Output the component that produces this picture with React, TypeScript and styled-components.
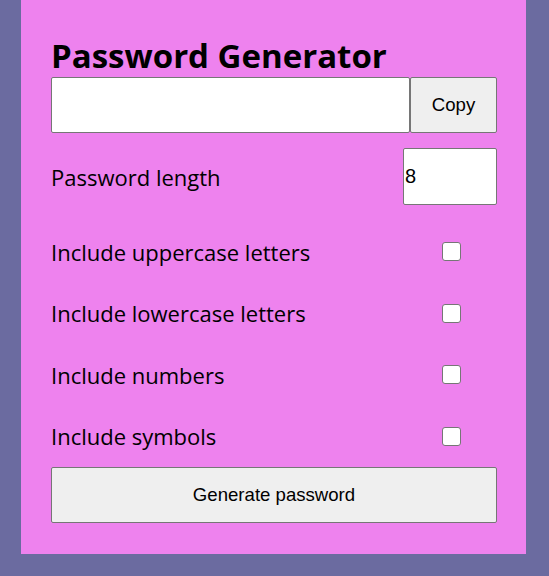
import styled, { createGlobalStyle } from 'styled-components';

const GlobalStyle = createGlobalStyle`
  html, body {
    margin: 0;
    padding: 0;
    background: #6b6ba0;
  }
  body {
    font-family: 'Open Sans', 'Noto Sans', sans-serif;
  }
`;

const Page = styled.div`
  display: flex;
  padding-left: 21px;
  min-height: 576px;
`;

const Card = styled.div`
  box-sizing: border-box;
  width: 505px;
  height: 554px;
  padding: 36px 29px 30px 30px;
  background: #ee82ee;
  display: flex;
  flex-direction: column;
`;

const Title = styled.h1`
  margin: 0;
  font-size: 33px;
  line-height: 40px;
  font-weight: 700;
  color: #000;
`;

const CopyRow = styled.div`
  display: flex;
  height: 56px;
  margin-top: 1px;
`;

const Field = styled.input`
  box-sizing: border-box;
  border: 1px solid #767676;
  border-radius: 2px;
  background: #fff;
  font-family: Arial, 'Liberation Sans', sans-serif;
  font-size: 20px;
  padding: 1px 2px;
  margin: 0;
  outline: none;
`;

const PasswordField = styled(Field)`
  flex: 1;
  height: 56px;
`;

const LengthField = styled(Field)`
  width: 94px;
  height: 57px;
  padding-left: 1px;
`;

const Button = styled.button<{ $wide?: boolean }>`
  box-sizing: border-box;
  height: 56px;
  width: ${({ $wide }) => ($wide ? '100%' : '87px')};
  margin: 0;
  border: 1px solid #767676;
  border-radius: 2px;
  background: #efefef;
  color: #000;
  font-family: Arial, 'Liberation Sans', sans-serif;
  font-size: 18.6px;
  cursor: pointer;
`;

const OptionRow = styled.label<{ $height: number }>`
  display: grid;
  grid-template-columns: 1fr 94px;
  align-items: center;
  height: ${({ $height }) => $height}px;
  font-size: 22px;
  color: #000;
`;

const Check = styled.input`
  appearance: none;
  box-sizing: border-box;
  justify-self: center;
  width: 19px;
  height: 19px;
  margin: 0 0 0 3px;
  border: 1px solid #767676;
  border-radius: 3px;
  background: #fff;
  cursor: pointer;

  &:checked {
    background: #0075ff;
    border-color: #0075ff;
  }
`;

const LengthRow = styled(OptionRow)`
  margin: 15px 0 16px;
`;

const options = [
  'Include uppercase letters',
  'Include lowercase letters',
  'Include numbers',
  'Include symbols',
];

export default function App() {
  return (
    <>
      <GlobalStyle />
      <Page>
        <Card>
          <Title>Password Generator</Title>
          <CopyRow>
            <PasswordField type="text" readOnly />
            <Button>Copy</Button>
          </CopyRow>
          <LengthRow $height={57}>
            <span>Password length</span>
            <LengthField type="number" defaultValue={8} />
          </LengthRow>
          {options.map((label) => (
            <OptionRow key={label} $height={61.5}>
              <span>{label}</span>
              <Check type="checkbox" />
            </OptionRow>
          ))}
          <Button $wide>Generate password</Button>
        </Card>
      </Page>
    </>
  );
}
